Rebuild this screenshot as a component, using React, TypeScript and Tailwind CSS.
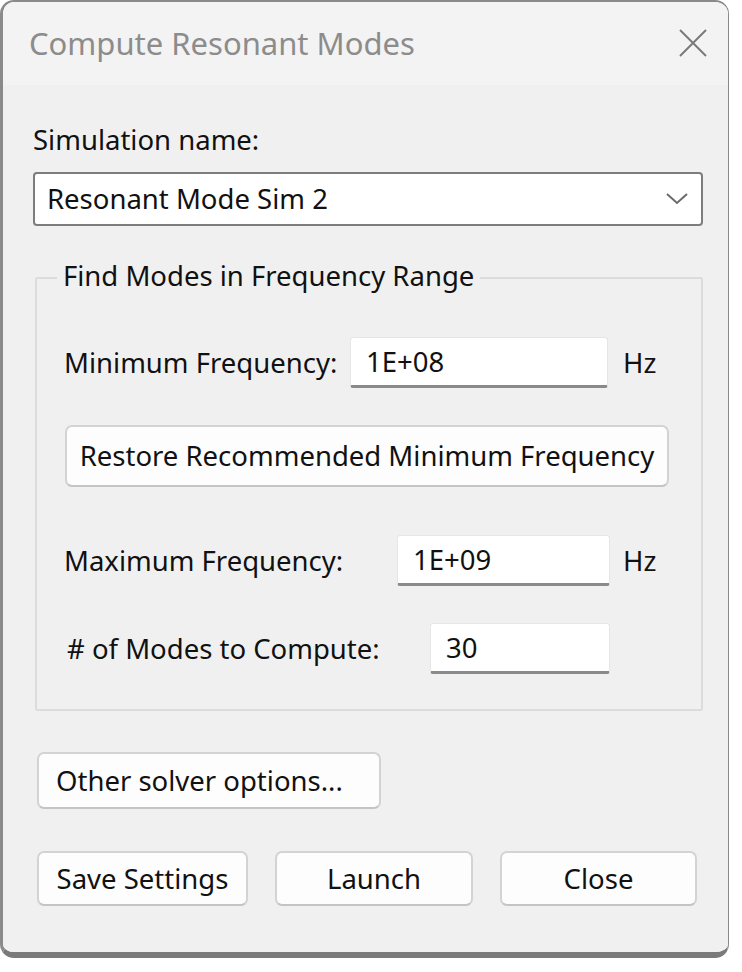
import React from "react";

function Btn({ children, className }: { children: React.ReactNode; className: string }) {
  return (
    <div
      className={
        "flex items-center justify-center rounded-[7px] border-[2px] border-[#d3d3d3] border-b-[#c4c4c4] bg-[#fdfdfd] " +
        className
      }
    >
      {children}
    </div>
  );
}

function Field({ value, className }: { value: string; className: string }) {
  return (
    <div
      className={
        "flex h-[51px] items-center rounded-[3px] border border-[#e6e6e6] border-b-[3px] border-b-[#8a8a8a] bg-white pl-[15px] " +
        className
      }
    >
      {value}
    </div>
  );
}

export default function App() {
  return (
    <div className="h-[972px] w-[742px] bg-white font-['Noto_Sans',sans-serif] text-[27.5px] leading-none text-[#111]">
      <div className="flex h-[958px] w-[729px] flex-col overflow-hidden rounded-[14px] border-l-[3px] border-r border-t-[2px] border-b-[6px] border-[#8a8a8a] border-b-[#7a7a7a]">
        {/* Title bar */}
        <div className="flex h-[83px] shrink-0 items-center justify-between bg-[#f3f3f3] pl-[26px] pr-[20px]">
          <span className="text-[31px] text-[#8c8c8c]">Compute Resonant Modes</span>
          <svg width="30" height="30" viewBox="0 0 30 30" className="mb-[2px]">
            <path d="M2 2 L28 28 M28 2 L2 28" stroke="#7a7a7a" strokeWidth="2" fill="none" />
          </svg>
        </div>

        {/* Body */}
        <div className="flex flex-1 flex-col bg-[#f0f0f0] pl-[30px] pr-[24px]">
          <div className="mt-[38px] flex h-[34px] items-center">Simulation name:</div>

          <div className="mt-[15px] flex h-[54px] w-[670px] items-center justify-between rounded-[4px] border-[2px] border-[#7d7d7d] bg-white pl-[12px] pr-[12px]">
            <span>Resonant Mode Sim 2</span>
            <svg width="24" height="14" viewBox="0 0 24 14">
              <path d="M2 2 L12 11 L22 2" stroke="#6a6a6a" strokeWidth="2" fill="none" />
            </svg>
          </div>

          {/* Group box */}
          <div className="relative ml-[2px] mt-[51px] h-[434px] w-[668px] rounded-[2px] border-[2px] border-[#dcdcdc]">
            <span className="absolute left-[20px] top-[-17px] bg-[#f0f0f0] px-[6px]">
              Find Modes in Frequency Range
            </span>
            <div className="flex flex-col pl-[27px]">
              <div className="mt-[58px] flex h-[51px] items-center">
                <span className="w-[286px]">Minimum Frequency:</span>
                <Field value="1E+08" className="w-[258px]" />
                <span className="ml-[15px]">Hz</span>
              </div>

              <Btn className="ml-[1px] mt-[37px] h-[62px] w-[604px]">
                <span>Restore Recommended Minimum Frequency</span>
              </Btn>

              <div className="mt-[48px] flex h-[51px] items-center">
                <span className="w-[333px]">Maximum Frequency:</span>
                <Field value="1E+09" className="w-[213px]" />
                <span className="ml-[13px]">Hz</span>
              </div>

              <div className="mt-[37px] flex h-[51px] items-center">
                <span className="ml-[3px] w-[363px]"># of Modes to Compute:</span>
                <Field value="30" className="w-[180px]" />
              </div>
            </div>
          </div>

          <Btn className="ml-[4px] mt-[41px] h-[57px] w-[344px] !justify-start pl-[17px]">
            <span>Other solver options...</span>
          </Btn>

          <div className="mt-[42px] flex">
            <Btn className="ml-[4px] h-[55px] w-[211px]">
              <span>Save Settings</span>
            </Btn>
            <Btn className="ml-[27px] h-[55px] w-[198px]">
              <span>Launch</span>
            </Btn>
            <Btn className="ml-[27px] h-[55px] w-[197px]">
              <span>Close</span>
            </Btn>
          </div>
        </div>
      </div>
    </div>
  );
}
